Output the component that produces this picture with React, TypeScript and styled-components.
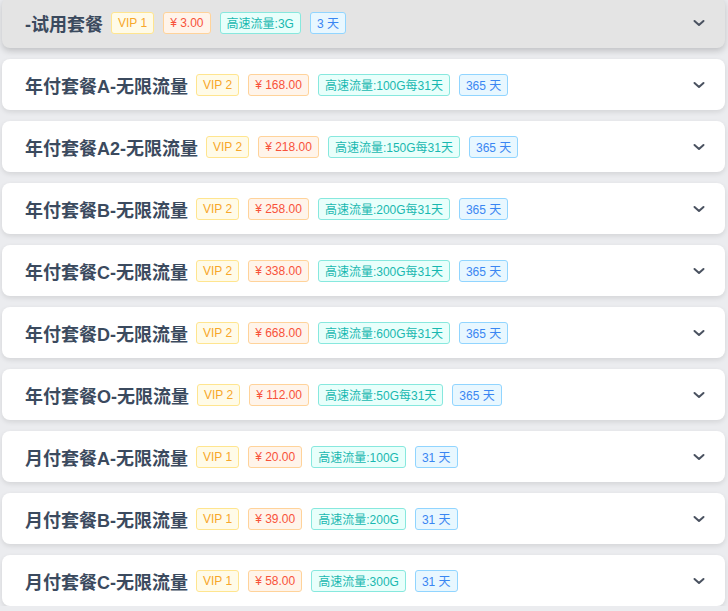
import styled, { createGlobalStyle } from "styled-components";

const GlobalStyle = createGlobalStyle`
  html, body {
    margin: 0;
    padding: 0;
    background: #ebecef;
    font-family: "Liberation Sans", "Noto Sans CJK SC", sans-serif;
    overflow: hidden;
  }
`;

const List = styled.div`
  display: flex;
  flex-direction: column;
  gap: 11px;
  margin-top: -3px;
  padding: 0 3px 0 2px;
`;

const Card = styled.div<{ $active?: boolean }>`
  height: 51px;
  display: flex;
  align-items: center;
  padding: 0 19px 0 23px;
  box-sizing: border-box;
  border-radius: 8px;
  background: ${(p) => (p.$active ? "#e4e4e4" : "#ffffff")};
  box-shadow: ${(p) =>
    p.$active ? "0 3px 6px rgba(0, 0, 0, 0.18)" : "0 2px 5px rgba(0, 0, 0, 0.1)"};
`;

const Title = styled.h3`
  margin: 0 8px 0 0;
  font-size: 18px;
  font-weight: bold;
  color: #3b4a5e;
  white-space: nowrap;
`;

const Tags = styled.div`
  display: flex;
  gap: 9px;
  flex: 1;
`;

const tagColors = {
  vip: { bg: "#fffbe8", border: "#ffe58f", color: "#f7a72a" },
  price: { bg: "#fff4ea", border: "#ffd39a", color: "#f8523a" },
  flow: { bg: "#e8fffb", border: "#87e8de", color: "#18b8b0" },
  days: { bg: "#e8f7ff", border: "#91d5ff", color: "#3a86f2" },
};

type Kind = keyof typeof tagColors;

const Tag = styled.span<{ $kind: Kind }>`
  display: inline-flex;
  align-items: center;
  height: 22px;
  padding: 0 6px;
  box-sizing: border-box;
  border-radius: 3px;
  font-size: 12px;
  white-space: nowrap;
  background: ${(p) => tagColors[p.$kind].bg};
  border: 1px solid ${(p) => tagColors[p.$kind].border};
  color: ${(p) => tagColors[p.$kind].color};
`;

const Chevron = styled.svg`
  width: 14px;
  height: 14px;
  flex-shrink: 0;
`;

const plans = [
  { name: "-试用套餐", vip: 1, price: "3.00", flow: "3G", days: 3 },
  { name: "年付套餐A-无限流量", vip: 2, price: "168.00", flow: "100G每31天", days: 365 },
  { name: "年付套餐A2-无限流量", vip: 2, price: "218.00", flow: "150G每31天", days: 365 },
  { name: "年付套餐B-无限流量", vip: 2, price: "258.00", flow: "200G每31天", days: 365 },
  { name: "年付套餐C-无限流量", vip: 2, price: "338.00", flow: "300G每31天", days: 365 },
  { name: "年付套餐D-无限流量", vip: 2, price: "668.00", flow: "600G每31天", days: 365 },
  { name: "年付套餐O-无限流量", vip: 2, price: "112.00", flow: "50G每31天", days: 365 },
  { name: "月付套餐A-无限流量", vip: 1, price: "20.00", flow: "100G", days: 31 },
  { name: "月付套餐B-无限流量", vip: 1, price: "39.00", flow: "200G", days: 31 },
  { name: "月付套餐C-无限流量", vip: 1, price: "58.00", flow: "300G", days: 31 },
];

const App = () => {
  return (
    <>
      <GlobalStyle />
      <List>
        {plans.map((plan, i) => (
          <Card key={plan.name} $active={i === 0}>
            <Title>{plan.name}</Title>
            <Tags>
              <Tag $kind="vip">VIP {plan.vip}</Tag>
              <Tag $kind="price">¥ {plan.price}</Tag>
              <Tag $kind="flow">高速流量:{plan.flow}</Tag>
              <Tag $kind="days">{plan.days} 天</Tag>
            </Tags>
            <Chevron viewBox="0 0 14 14">
              <path d="M2.5 5l4.5 4L11.5 5" fill="none" stroke="#4a5260" strokeWidth="2" strokeLinecap="round" strokeLinejoin="round" />
            </Chevron>
          </Card>
        ))}
      </List>
    </>
  );
};

export default App;
